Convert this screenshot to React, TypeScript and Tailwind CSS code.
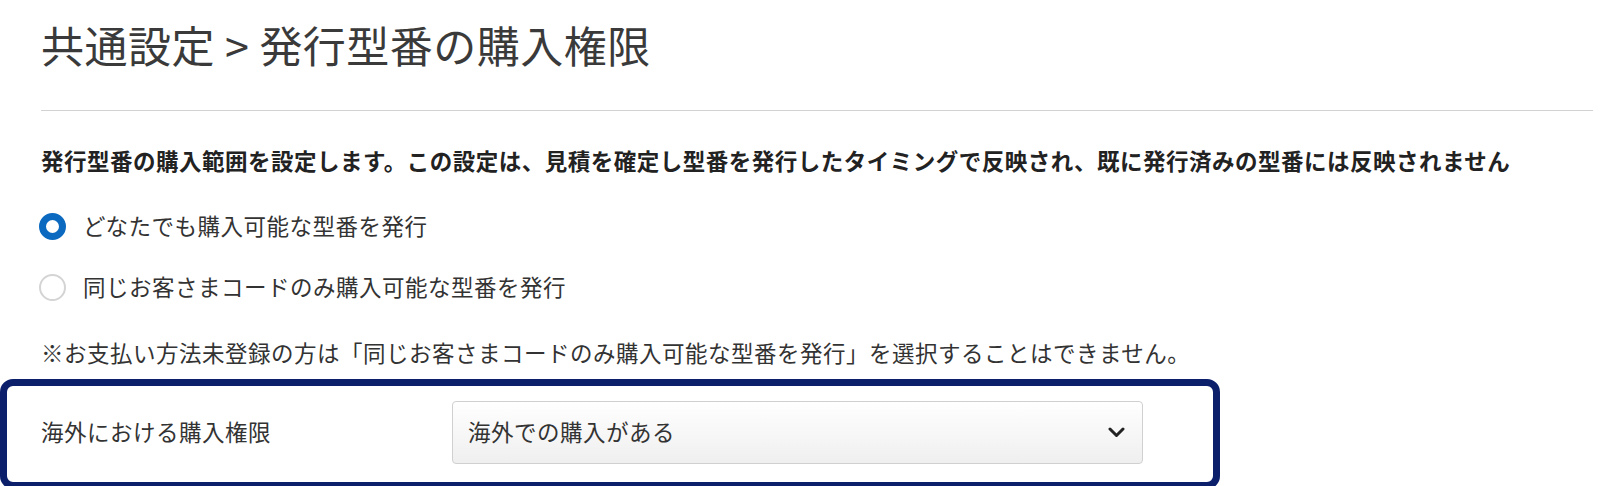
import { useState } from 'react';

const font = { fontFamily: '"Noto Sans CJK JP", "Noto Sans", sans-serif' };

function Radio({ checked, label, onClick }: { checked: boolean; label: string; onClick: () => void }) {
  return (
    <button type="button" onClick={onClick} className="flex items-center h-[34px] gap-[17px] text-left">
      {checked ? (
        <span className="w-[27px] h-[27px] rounded-full border-[7px] border-[#0b6abf] bg-white -ml-[2px]" />
      ) : (
        <span className="w-[27px] h-[27px] rounded-full border-2 border-[#d4d4d4] bg-white -ml-[2px]" />
      )}
      <span className="text-[22.5px] tracking-[0.5px] text-[#333]">{label}</span>
    </button>
  );
}

export default function App() {
  const [scope, setScope] = useState<'any' | 'same'>('any');

  return (
    <div className="w-[1606px] h-[486px] bg-white overflow-hidden" style={font}>
      <div className="pl-[41px] pr-[13px] pt-[17px]">
        {/* Title */}
        <h1 className="text-[43px] leading-[54px] font-normal text-[#3a3a3a] tracking-[0.5px]">
          共通設定<span className="mx-[10px]">&gt;</span>発行型番の購入権限
        </h1>
        <div className="mt-[39px] h-px bg-[#d2d2d2]" />

        {/* Description */}
        <p className="mt-[32px] text-[22.5px] leading-[34px] font-bold text-[#222] tracking-[0.5px]">
          発行型番の購入範囲を設定します。この設定は、見積を確定し型番を発行したタイミングで反映され、既に発行済みの型番には反映されません
        </p>

        <div className="mt-[32px] flex flex-col gap-[27px]">
          <Radio checked={scope === 'any'} label="どなたでも購入可能な型番を発行" onClick={() => setScope('any')} />
          <Radio checked={scope === 'same'} label="同じお客さまコードのみ購入可能な型番を発行" onClick={() => setScope('same')} />
        </div>

        <p className="mt-[31px] text-[22.5px] leading-[34px] text-[#333] tracking-[0.5px]">
          ※お支払い方法未登録の方は「同じお客さまコードのみ購入可能な型番を発行」を選択することはできません。
        </p>
      </div>

      {/* Highlighted row */}
      <div className="mt-[10px] w-[1220px] h-[110px] border-[7px] border-[#0b1f6b] rounded-[13px] flex items-center pl-[34px] pb-[4px]">
        <span className="w-[411px] text-[22.5px] text-[#333] tracking-[0.5px]">海外における購入権限</span>
        <div className="w-[691px] h-[63px] rounded-[4px] border border-[#d0d0d0] bg-linear-to-b from-white to-[#efefef] flex items-center justify-between pl-[15px] pr-[17px]">
          <span className="text-[22.5px] text-[#333] tracking-[0.5px]">海外での購入がある</span>
          <svg width="17" height="11" viewBox="0 0 17 11" fill="none">
            <polyline points="2,2 8.5,8.5 15,2" stroke="#222" strokeWidth="3" strokeLinecap="round" strokeLinejoin="round" />
          </svg>
        </div>
      </div>
    </div>
  );
}
